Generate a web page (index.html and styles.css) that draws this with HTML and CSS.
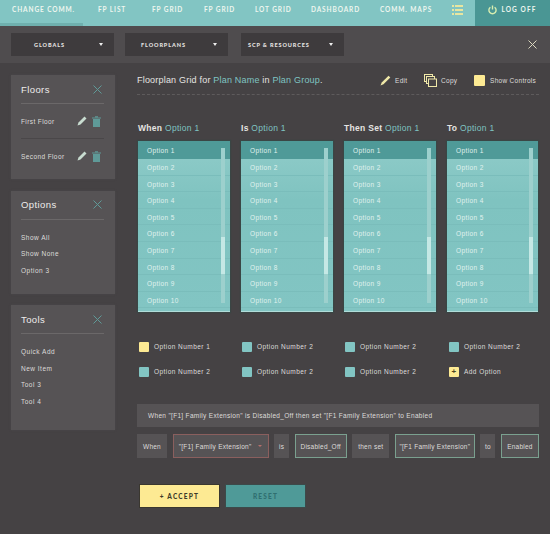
FILE: index.html
```html
<!DOCTYPE html>
<html>
<head>
  <meta charset="utf-8">
  <link rel="stylesheet" href="styles.css">
  <title>Floorplan Grid</title>
</head>
<body>
  <nav class="topnav">
    <a class="nav-item nav-active w-change">CHANGE COMM.</a>
    <a class="nav-item w-list">FP LIST</a>
    <a class="nav-item w-grid">FP GRID</a>
    <a class="nav-item w-grid2">FP GRID</a>
    <a class="nav-item w-lot">LOT GRID</a>
    <a class="nav-item w-dash">DASHBOARD</a>
    <a class="nav-item w-maps">COMM. MAPS</a>
    <span class="nav-list-icon">
      <svg width="11" height="10" viewBox="0 0 11 10"><g fill="#e8e6a0"><rect x="0" y="0" width="2" height="2"/><rect x="0" y="4" width="2" height="2"/><rect x="0" y="8" width="2" height="2"/><rect x="3" y="0" width="8" height="2"/><rect x="3" y="4" width="8" height="2"/><rect x="3" y="8" width="8" height="2"/></g></svg>
    </span>
    <a class="nav-logoff">
      <svg width="9" height="10" viewBox="0 0 9 10"><path d="M2.4 2.2a3.6 3.6 0 1 0 4.2 0M4.5 .5v4" fill="none" stroke="#d8eeb0" stroke-width="1.4"/></svg>
      LOG OFF
    </a>
  </nav>

  <div class="subbar">
    <button class="drop">GLOBALS<i class="caret"></i></button>
    <button class="drop">FLOORPLANS<i class="caret"></i></button>
    <button class="drop">SCP &amp; RESOURCES<i class="caret"></i></button>
    <svg class="subbar-close" width="9" height="9" viewBox="0 0 9 9"><path d="M.5 .5l8 8M8.5 .5l-8 8" stroke="#dcd8c0" stroke-width="1" fill="none"/></svg>
  </div>

  <div class="content">
    <aside class="sidebar">
      <section class="panel panel-floors">
        <div class="panel-head"><h3>Floors</h3><svg class="x" width="9" height="9" viewBox="0 0 9 9"><path d="M.5 .5l8 8M8.5 .5l-8 8" stroke="#5f9a98" fill="none"/></svg></div>
        <div class="floor floor-line">
          <span>First Floor</span>
          <svg class="pen" width="10" height="10" viewBox="0 0 10 10"><path d="M.5 9.500l1-3L7.500 .5l2 2-6 6z" fill="#c8dcd0"/></svg>
          <svg class="can" width="9" height="11" viewBox="0 0 9 11"><path d="M0 1.500h9v1H0zM3 .2h3v1H3zM1 3h7v8H1z" fill="#5f9a98"/></svg>
        </div>
        <div class="floor">
          <span>Second Floor</span>
          <svg class="pen" width="10" height="10" viewBox="0 0 10 10"><path d="M.5 9.500l1-3L7.500 .5l2 2-6 6z" fill="#c8dcd0"/></svg>
          <svg class="can" width="9" height="11" viewBox="0 0 9 11"><path d="M0 1.500h9v1H0zM3 .2h3v1H3zM1 3h7v8H1z" fill="#5f9a98"/></svg>
        </div>
      </section>
      <section class="panel panel-options">
        <div class="panel-head"><h3>Options</h3><svg class="x" width="9" height="9" viewBox="0 0 9 9"><path d="M.5 .5l8 8M8.5 .5l-8 8" stroke="#5f9a98" fill="none"/></svg></div>
        <ul class="side-links">
          <li>Show All</li>
          <li>Show None</li>
          <li>Option 3</li>
        </ul>
      </section>
      <section class="panel panel-tools">
        <div class="panel-head"><h3>Tools</h3><svg class="x" width="9" height="9" viewBox="0 0 9 9"><path d="M.5 .5l8 8M8.5 .5l-8 8" stroke="#5f9a98" fill="none"/></svg></div>
        <ul class="side-links">
          <li>Quick Add</li>
          <li>New Item</li>
          <li>Tool 3</li>
          <li>Tool 4</li>
        </ul>
      </section>
    </aside>

    <main class="main">
      <header class="title-row">
        <h1>Floorplan Grid for <em>Plan Name</em> in <em>Plan Group</em>.</h1>
        <span class="tool tool-edit">
          <svg width="11" height="11" viewBox="0 0 11 11"><path d="M.5 10.500l1.200-3L8.500 .7l1.800 1.800-6.800 6.800z" fill="#f0e8a8"/></svg>
          Edit
        </span>
        <span class="tool tool-copy">
          <svg width="13" height="13" viewBox="0 0 13 13"><rect x=".5" y=".5" width="8" height="7" fill="none" stroke="#f0e8a8"/><rect x="2.500" y="2.500" width="8" height="7" fill="#454244" stroke="#f0e8a8"/><rect x="4.500" y="5" width="8" height="7.500" fill="#454244" stroke="#f0e8a8"/></svg>
          Copy
        </span>
        <span class="tool tool-show"><i class="swatch swatch-yellow"></i>Show Controls</span>
      </header>

      <div class="columns">
        <div class="col">
          <h2>When <em>Option 1</em></h2>
          <div class="listbox">
            <div class="opt opt-on">Option 1</div><div class="opt">Option 2</div><div class="opt">Option 3</div><div class="opt">Option 4</div><div class="opt">Option 5</div><div class="opt">Option 6</div><div class="opt">Option 7</div><div class="opt">Option 8</div><div class="opt">Option 9</div><div class="opt">Option 10</div>
            <div class="track"><div class="thumb"></div></div>
          </div>
        </div>
        <div class="col">
          <h2>Is <em>Option 1</em></h2>
          <div class="listbox">
            <div class="opt opt-on">Option 1</div><div class="opt">Option 2</div><div class="opt">Option 3</div><div class="opt">Option 4</div><div class="opt">Option 5</div><div class="opt">Option 6</div><div class="opt">Option 7</div><div class="opt">Option 8</div><div class="opt">Option 9</div><div class="opt">Option 10</div>
            <div class="track"><div class="thumb"></div></div>
          </div>
        </div>
        <div class="col">
          <h2>Then Set <em>Option 1</em></h2>
          <div class="listbox">
            <div class="opt opt-on">Option 1</div><div class="opt">Option 2</div><div class="opt">Option 3</div><div class="opt">Option 4</div><div class="opt">Option 5</div><div class="opt">Option 6</div><div class="opt">Option 7</div><div class="opt">Option 8</div><div class="opt">Option 9</div><div class="opt">Option 10</div>
            <div class="track"><div class="thumb"></div></div>
          </div>
        </div>
        <div class="col">
          <h2>To <em>Option 1</em></h2>
          <div class="listbox">
            <div class="opt opt-on">Option 1</div><div class="opt">Option 2</div><div class="opt">Option 3</div><div class="opt">Option 4</div><div class="opt">Option 5</div><div class="opt">Option 6</div><div class="opt">Option 7</div><div class="opt">Option 8</div><div class="opt">Option 9</div><div class="opt">Option 10</div>
            <div class="track"><div class="thumb"></div></div>
          </div>
        </div>
      </div>

      <div class="checks">
        <label class="check"><i class="swatch swatch-yellow"></i>Option Number 1</label>
        <label class="check"><i class="swatch"></i>Option Number 2</label>
        <label class="check"><i class="swatch"></i>Option Number 2</label>
        <label class="check"><i class="swatch"></i>Option Number 2</label>
        <label class="check"><i class="swatch"></i>Option Number 2</label>
        <label class="check"><i class="swatch"></i>Option Number 2</label>
        <label class="check"><i class="swatch"></i>Option Number 2</label>
        <label class="check"><i class="swatch swatch-yellow swatch-plus">+</i>Add Option</label>
      </div>

      <div class="sentence">When "[F1] Family Extension" is Disabled_Off then set "[F1 Family Extension" to Enabled</div>

      <div class="builder">
        <span class="chip c-when">When</span>
        <span class="chip chip-red c-family">"[F1] Family Extension"<i class="mini-caret"></i></span>
        <span class="chip c-is">is</span>
        <span class="chip chip-green c-off">Disabled_Off</span>
        <span class="chip c-then">then set</span>
        <span class="chip chip-green c-family2">"[F1 Family Extension"</span>
        <span class="chip c-to">to</span>
        <span class="chip chip-green c-on">Enabled</span>
      </div>

      <div class="actions">
        <button class="btn btn-accept">+ ACCEPT</button>
        <button class="btn btn-reset">RESET</button>
      </div>
    </main>
  </div>
</body>
</html>
```

FILE: styles.css
```css
html, body {
  margin: 0;
  padding: 0;
}

body {
  width: 550px;
  height: 534px;
  overflow: hidden;
  background-color: #454244;
  color: #dedcda;
  font-family: "Liberation Sans", Arial, sans-serif;
  font-size: 7px;
  letter-spacing: 0.3px;
}

h1, h2, h3, ul {
  margin: 0;
  padding: 0;
  font-weight: normal;
}

em {
  font-style: normal;
  color: #7fc4c2;
}

/* top nav */
.topnav {
  display: flex;
  align-items: center;
  height: 26px;
  background-color: #82c5c3;
  color: #eef6ef;
  font-family: "Lato", sans-serif;
  font-size: 6.500px;
  font-weight: 700;
  letter-spacing: 0.9px;
}

.nav-item {
  display: block;
  box-sizing: border-box;
  height: 26px;
  line-height: 20px;
  white-space: nowrap;
}

.nav-active {
  padding-left: 12px;
  border-bottom: 3px solid #6fb0ae;
}

.w-change { width: 83px; margin-right: 15px; }
.w-list { width: 54px; }
.w-grid { width: 52px; }
.w-grid2 { width: 51px; }
.w-lot { width: 56px; }
.w-dash { width: 69px; }
.w-maps { width: 72px; }

.nav-list-icon {
  display: flex;
  width: 22px;
  padding-bottom: 7px;
}

.nav-logoff {
  display: flex;
  align-items: center;
  justify-content: center;
  gap: 4px;
  box-sizing: border-box;
  width: 75px;
  height: 26px;
  margin-left: auto;
  padding-bottom: 7px;
  background-color: #4a9694;
  letter-spacing: 1.1px;
}

/* second bar */
.subbar {
  display: flex;
  align-items: center;
  height: 37px;
  padding-left: 11px;
  background-color: #4f4c4e;
}

.drop {
  display: flex;
  align-items: center;
  justify-content: space-between;
  width: 103px;
  height: 23px;
  margin-right: 11px;
  padding: 0 11px 0 23px;
  border: 0;
  background-color: #3e3b3d;
  color: #e6e4e2;
  font-family: "Lato", sans-serif;
  font-size: 5.500px;
  font-weight: 900;
  letter-spacing: 0.9px;
}

.drop:nth-child(2) {
  margin-right: 13px;
  padding-left: 16px;
}

.drop:nth-child(3) {
  padding-left: 7px;
}

.caret {
  width: 0;
  height: 0;
  border-left: 2.500px solid transparent;
  border-right: 2.500px solid transparent;
  border-top: 3px solid #eeeeee;
}

.subbar-close {
  margin-left: auto;
  margin-right: 13px;
}

/* page body */
.content {
  display: flex;
  align-items: flex-start;
}

.sidebar {
  width: 104px;
  margin-left: 11px;
  padding-top: 12px;
}

.panel {
  box-sizing: border-box;
  margin-bottom: 11.500px;
  padding: 0 11px 0 10px;
  background-color: #565355;
  box-shadow: 0 0 2px #4c494b;
}

.panel-floors { height: 104px; }
.panel-options { height: 103px; }
.panel-tools { height: 125px; }

.panel-head {
  display: flex;
  align-items: center;
  justify-content: space-between;
  height: 28px;
  border-bottom: 1px solid #6b6869;
}

.panel-head h3 {
  font-size: 9.500px;
  color: #eeeceb;
  letter-spacing: 0.4px;
}

.panel-head .x {
  margin-right: 2px;
}

.floor {
  display: flex;
  align-items: center;
  height: 34px;
  font-size: 6.500px;
  letter-spacing: 0.4px;
}

.floor-line {
  border-bottom: 1px solid #4a4749;
}

.floor span {
  flex: 1;
}

.pen {
  margin-right: 5px;
}

.can {
  margin-right: 3px;
}

.side-links {
  padding-top: 10px;
  list-style: none;
  font-size: 6.500px;
  letter-spacing: 0.5px;
}

.side-links li {
  height: 16.600px;
  line-height: 16.600px;
}

/* main */
.main {
  width: 402px;
  margin-left: 22px;
}

.title-row {
  display: flex;
  align-items: center;
  box-sizing: border-box;
  height: 32px;
  padding-top: 10px;
  padding-bottom: 7px;
  border-bottom: 1px dashed #5e5b5c;
}

.title-row h1 {
  width: 243px;
  font-size: 9px;
  color: #e6e4e2;
  letter-spacing: 0.2px;
  white-space: nowrap;
}

.tool {
  display: flex;
  align-items: center;
  font-size: 6.500px;
  white-space: nowrap;
}

.tool svg {
  margin-right: 4px;
}

.tool-edit { width: 44px; }
.tool-copy { width: 50px; }
.tool-show .swatch { width: 11px; height: 11px; margin-right: 5px; }

.swatch {
  display: block;
  flex: none;
  width: 10px;
  height: 10px;
  border-radius: 1px;
  background-color: #82c5c3;
}

.swatch-yellow {
  background-color: #fdea93;
}

.swatch-plus {
  color: #4a4520;
  font-style: normal;
  font-size: 8px;
  font-weight: bold;
  line-height: 10px;
  text-align: center;
}

.columns {
  display: flex;
  gap: 11px;
  padding-top: 28px;
  padding-left: 1px;
}

.col {
  width: 92px;
}

.col:last-child {
  width: 91px;
}

.col h2 {
  height: 18px;
  font-size: 8.500px;
  line-height: 11px;
  font-weight: 700;
  color: #e6e4e2;
  letter-spacing: 0.3px;
}

.col h2 em {
  font-weight: normal;
}

.listbox {
  position: relative;
  height: 171px;
  background: linear-gradient(#90ccc9, #7fc3c0 35%, #82c5c3);
  box-shadow: 0 0 1px 1px #3a4645;
  border-bottom: 1px solid #b1dcd9;
  box-sizing: border-box;
  overflow: hidden;
}

.opt {
  box-sizing: border-box;
  height: 16.600px;
  padding-left: 9px;
  border-bottom: 1px solid #7abdbb;
  color: #e0f2ef;
  font-size: 6.500px;
  line-height: 17.600px;
  letter-spacing: 0.4px;
}

.opt-on {
  height: 18px;
  background-color: #4f9a98;
  border-bottom: 0;
  line-height: 20px;
}

.track {
  position: absolute;
  top: 7px;
  right: 5px;
  width: 4px;
  height: 155px;
  background-color: #9dd0cd;
}

.thumb {
  width: 4px;
  height: 37px;
  margin-top: 89px;
  background-color: #c5e8e5;
}

.checks {
  display: grid;
  grid-template-columns: 103px 103px 104px 90px;
  grid-auto-rows: 25px;
  padding-top: 22px;
  padding-left: 2px;
}

.check {
  display: flex;
  align-items: center;
  gap: 5px;
  font-size: 6.500px;
  letter-spacing: 0.45px;
  white-space: nowrap;
}

.sentence {
  box-sizing: border-box;
  height: 23px;
  margin-top: 20px;
  padding-left: 11px;
  background-color: #565355;
  font-size: 6.500px;
  line-height: 23px;
  letter-spacing: 0.32px;
  white-space: nowrap;
}

.builder {
  display: flex;
  justify-content: space-between;
  margin-top: 7px;
}

.chip {
  display: flex;
  align-items: center;
  justify-content: center;
  box-sizing: border-box;
  height: 24px;
  background-color: #565355;
  font-size: 6.500px;
  letter-spacing: 0.25px;
  white-space: nowrap;
}

.chip-red { border: 1px solid #8a5f5e; }
.chip-green { border: 1px solid #7aa08f; }

.c-when { width: 30px; }
.c-family { width: 96px; }
.c-is { width: 15px; }
.c-off { width: 52px; }
.c-then { width: 37px; }
.c-family2 { width: 80px; }
.c-to { width: 15px; }
.c-on { width: 38px; }

.mini-caret {
  width: 0;
  height: 0;
  margin-left: 7px;
  border-left: 2px solid transparent;
  border-right: 2px solid transparent;
  border-top: 2.500px solid #b5706c;
}

.actions {
  display: flex;
  gap: 5px;
  padding-top: 26px;
  padding-left: 2px;
}

.btn {
  box-sizing: border-box;
  width: 81px;
  height: 24px;
  padding: 0;
  border: 1px solid #3a372f;
  font-family: "Lato", sans-serif;
  font-size: 6.500px;
  font-weight: 900;
  letter-spacing: 1.2px;
}

.btn-accept {
  background-color: #fdea93;
  color: #3c3a2a;
}

.btn-reset {
  background-color: #4f9a98;
  color: #2f6f70;
  border-color: #3c4a4a;
}
```
